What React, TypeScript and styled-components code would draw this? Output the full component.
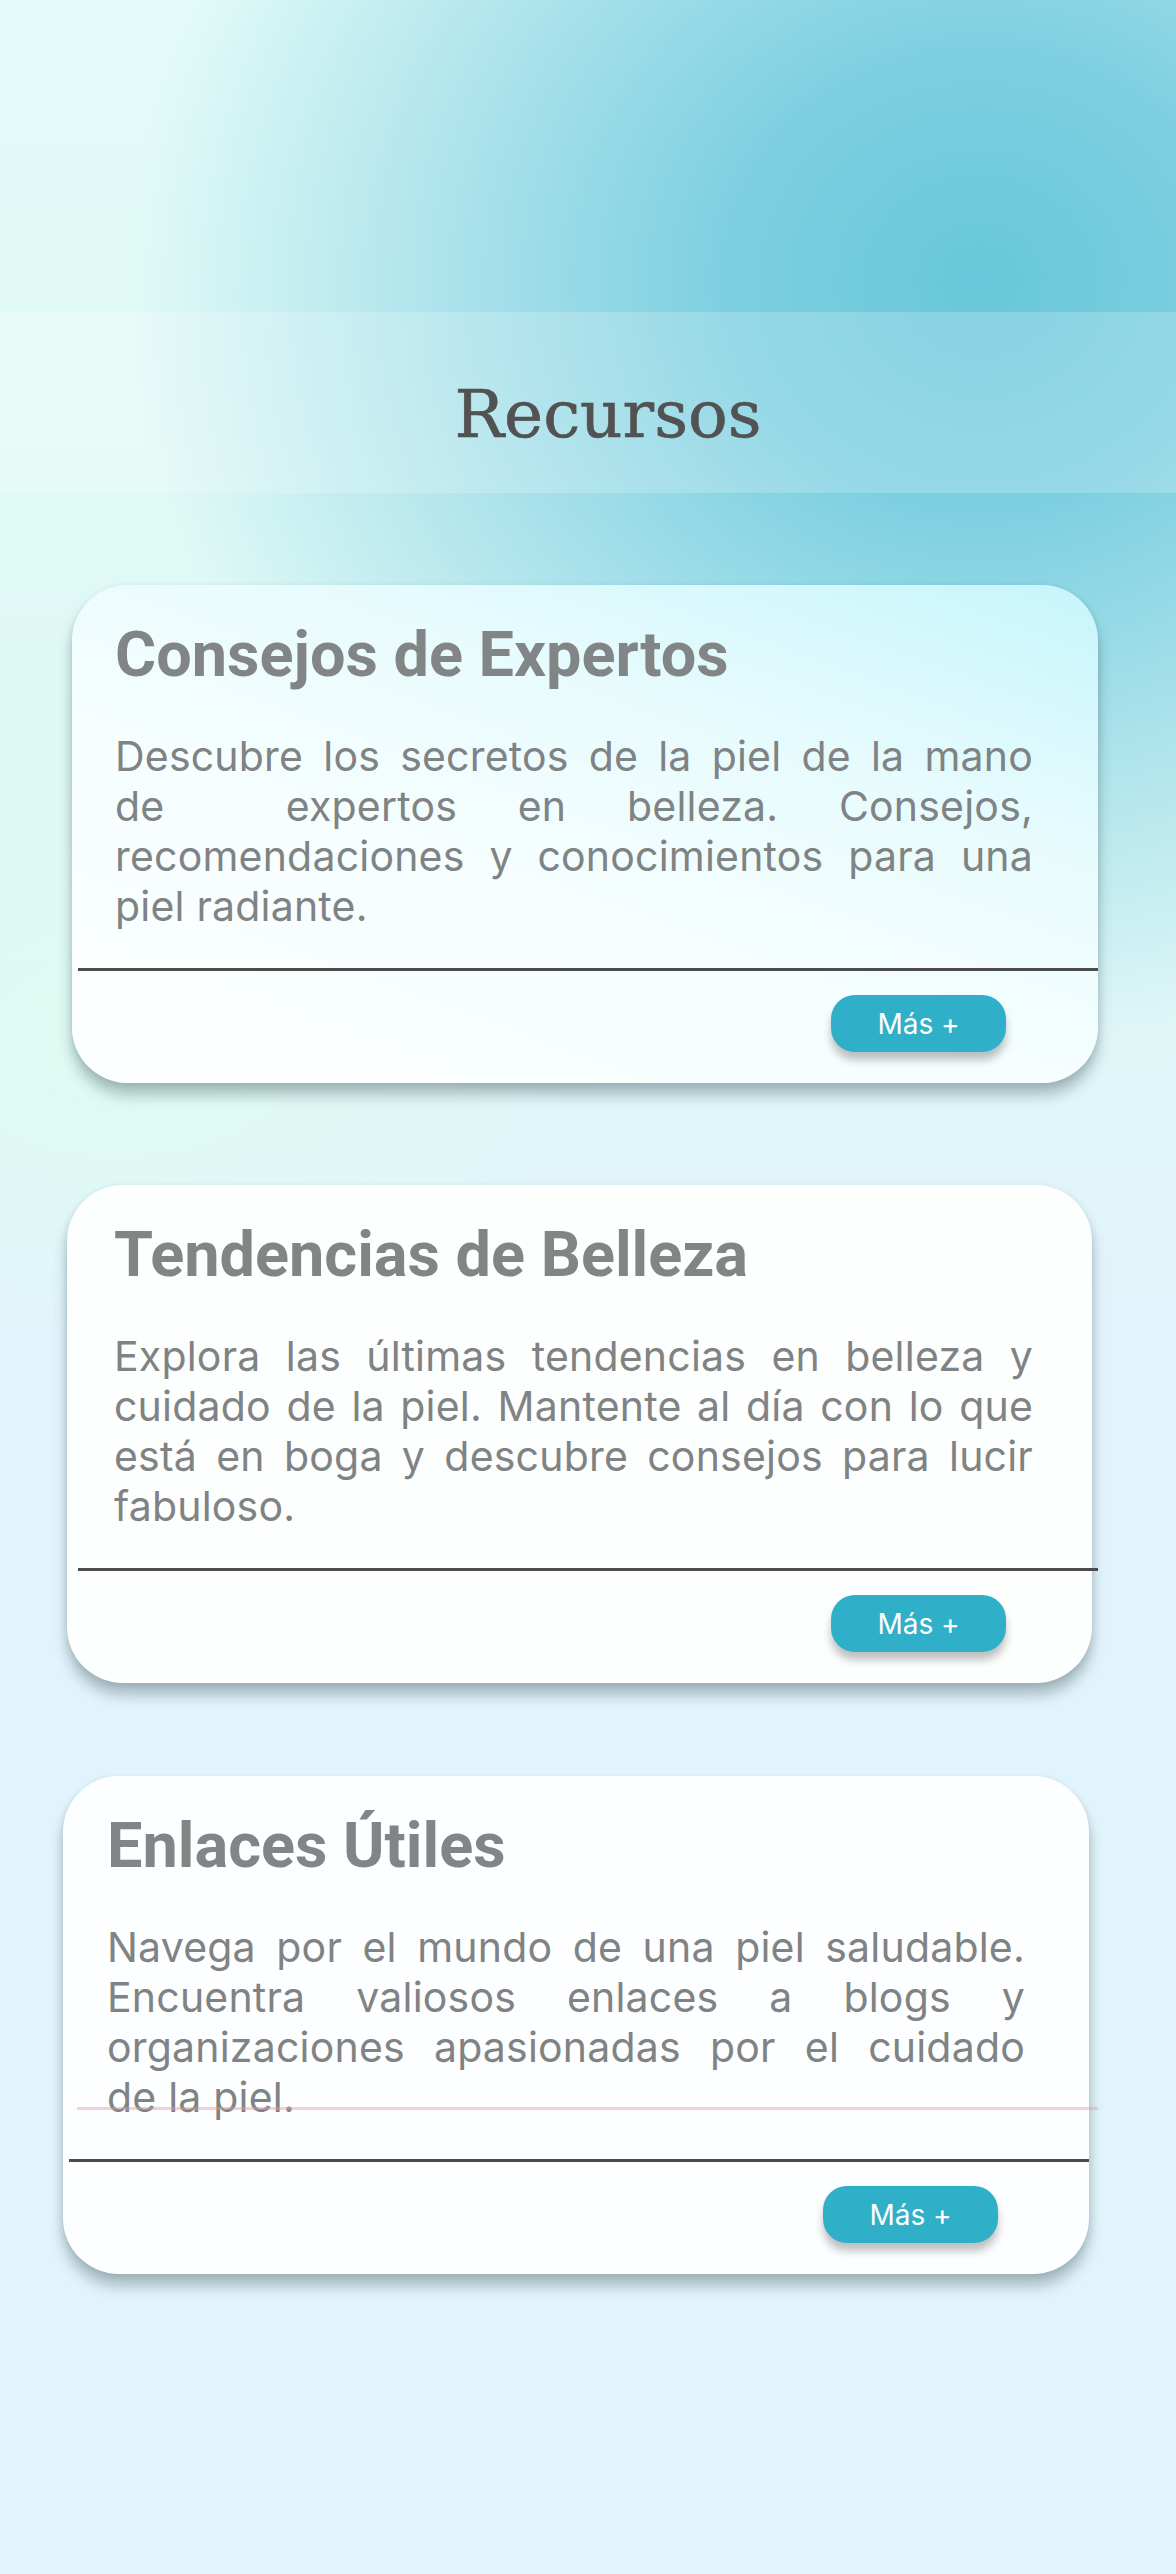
import React from "react";
import styled, { createGlobalStyle } from "styled-components";

const GlobalStyle = createGlobalStyle`
  html, body {
    margin: 0;
    padding: 0;
  }
  body {
    font-family: Inter, "Noto Sans", sans-serif;
    background: #e2f4fb;
  }
`;

const Page = styled.main`
  box-sizing: border-box;
  width: 1176px;
  min-height: 2574px;
  padding-top: 312px;
  display: flex;
  flex-direction: column;
  align-items: flex-start;
  background:
    radial-gradient(ellipse 480px 300px at 120px 1040px, rgba(222, 252, 240, 0.85) 0%, rgba(222, 252, 240, 0) 100%),
    radial-gradient(ellipse 1000px 900px at 980px 280px, #68c7da 0%, #7ccfe0 25%, #a6e0ea 50%, rgba(205, 240, 244, 0) 85%),
    linear-gradient(180deg, #e3fbf8 0px, #def8f4 800px, #e2f4fb 1300px, #e2f4fb 100%);
`;

const HeaderBand = styled.header`
  box-sizing: border-box;
  width: 100%;
  height: 181px;
  padding: 64px 0 0 40px;
  background: rgba(255, 255, 255, 0.2);
`;

const PageTitle = styled.h1`
  margin: 0;
  text-align: center;
  font-family: "DejaVu Serif", "Liberation Serif", serif;
  font-weight: 400;
  font-size: 66px;
  line-height: 77px;
  color: #525252;
  -webkit-text-stroke: 0.6px #525252;
`;

const Card = styled.article<{ $x: number; $mt: number; $w: number; $bg: string }>`
  position: relative;
  box-sizing: border-box;
  width: ${(p) => p.$w}px;
  height: 498px;
  margin: ${(p) => p.$mt}px 0 0 ${(p) => p.$x}px;
  padding-top: 32px;
  border-radius: 56px;
  background: ${(p) => p.$bg};
  box-shadow: 0 12px 14px rgba(50, 70, 80, 0.33), 0 2px 6px rgba(50, 70, 80, 0.12);
  display: flex;
  flex-direction: column;
`;

const CardBody = styled.div<{ $pl: number; $pr: number }>`
  padding: 0 ${(p) => p.$pr}px 0 ${(p) => p.$pl}px;
`;

const CardTitle = styled.h2`
  margin: 0;
  font-family: Roboto, "Liberation Sans", sans-serif;
  font-weight: 700;
  font-size: 63px;
  line-height: 76px;
  color: #828585;
`;

const CardText = styled.p`
  margin: 38px 0 0;
  font-family: Inter, "Noto Sans", sans-serif;
  font-weight: 400;
  font-size: 41px;
  letter-spacing: 0.2px;
  line-height: 50px;
  text-align: justify;
  color: #808383;
`;

const Divider = styled.hr<{ $ml: number; $mr: number }>`
  box-sizing: border-box;
  height: 3px;
  border: 0;
  margin: 37px ${(p) => p.$mr}px 0 ${(p) => p.$ml}px;
  background: #4b4b4b;
`;

const CardFooter = styled.div<{ $pr: number }>`
  display: flex;
  justify-content: flex-end;
  padding: 24px ${(p) => p.$pr}px 0 0;
`;

const MoreButton = styled.button`
  width: 175px;
  height: 57px;
  border: 0;
  border-radius: 24px;
  background: #2fb0c8;
  color: #ffffff;
  font-family: Inter, "Noto Sans", sans-serif;
  font-size: 28px;
  font-weight: 400;
  box-shadow: 0 8px 8px rgba(0, 0, 0, 0.25);
  cursor: pointer;
`;

const OverlayLine = styled.span`
  position: absolute;
  top: 331px;
  left: 14px;
  right: -9px;
  height: 3px;
  background: rgba(236, 150, 155, 0.45);
  pointer-events: none;
`;

type CardData = {
  title: string;
  text: string;
  x: number;
  mt: number;
  w: number;
  bg: string;
  pl: number;
  pr: number;
  dl: number;
  dr: number;
  br: number;
  overlay?: boolean;
};

const cards: CardData[] = [
  {
    title: "Consejos de Expertos",
    text:
      "Descubre los secretos de la piel de la mano de\u00A0 expertos en belleza. Consejos, recomendaciones y conocimientos para una piel radiante.",
    x: 72,
    mt: 92,
    w: 1026,
    bg: "linear-gradient(200deg, #c6f5fb 0%, #e6fbfd 30%, #f7feff 60%, #fcffff 100%)",
    pl: 43,
    pr: 65,
    dl: 6,
    dr: 0,
    br: 92,
  },
  {
    title: "Tendencias de Belleza",
    text:
      "Explora las últimas tendencias en belleza y cuidado de la piel. Mantente al día con lo que está en boga y descubre consejos para lucir fabuloso.",
    x: 67,
    mt: 102,
    w: 1025,
    bg: "#fdfefe",
    pl: 47,
    pr: 59,
    dl: 11,
    dr: -6,
    br: 86,
  },
  {
    title: "Enlaces Útiles",
    text:
      "Navega por el mundo de una piel saludable. Encuentra valiosos enlaces a blogs y organizaciones apasionadas por el cuidado de\u00A0la piel.",
    x: 63,
    mt: 93,
    w: 1026,
    bg: "#fdfeff",
    pl: 44,
    pr: 64,
    dl: 6,
    dr: 0,
    br: 91,
    overlay: true,
  },
];

export default function App() {
  return (
    <>
      <GlobalStyle />
      <Page>
        <HeaderBand>
          <PageTitle>Recursos</PageTitle>
        </HeaderBand>
        {cards.map((c) => (
          <Card key={c.title} $x={c.x} $mt={c.mt} $w={c.w} $bg={c.bg}>
            <CardBody $pl={c.pl} $pr={c.pr}>
              <CardTitle>{c.title}</CardTitle>
              <CardText>{c.text}</CardText>
            </CardBody>
            <Divider $ml={c.dl} $mr={c.dr} />
            <CardFooter $pr={c.br}>
              <MoreButton type="button">Más +</MoreButton>
            </CardFooter>
            {c.overlay && <OverlayLine />}
          </Card>
        ))}
      </Page>
    </>
  );
}
